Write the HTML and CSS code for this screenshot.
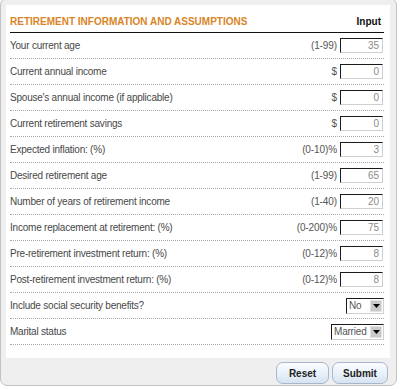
FILE: index.html
```html
<!DOCTYPE html>
<html>
<head>
<meta charset="utf-8">
<link rel="stylesheet" href="styles.css">
</head>
<body>
<div class="frame">
  <div class="panel">
    <div class="head">
      <span class="title">RETIREMENT INFORMATION AND ASSUMPTIONS</span>
      <span class="col">Input</span>
    </div>
    <div class="row"><span class="label">Your current age</span><span class="ctl"><span class="hint">(1-99)</span><span class="field">35</span></span></div>
    <div class="row"><span class="label">Current annual income</span><span class="ctl"><span class="hint">$</span><span class="field">0</span></span></div>
    <div class="row"><span class="label">Spouse's annual income (if applicable)</span><span class="ctl"><span class="hint">$</span><span class="field">0</span></span></div>
    <div class="row"><span class="label">Current retirement savings</span><span class="ctl"><span class="hint">$</span><span class="field">0</span></span></div>
    <div class="row"><span class="label">Expected inflation: (%)</span><span class="ctl"><span class="hint">(0-10)%</span><span class="field">3</span></span></div>
    <div class="row"><span class="label">Desired retirement age</span><span class="ctl"><span class="hint">(1-99)</span><span class="field">65</span></span></div>
    <div class="row"><span class="label">Number of years of retirement income</span><span class="ctl"><span class="hint">(1-40)</span><span class="field">20</span></span></div>
    <div class="row"><span class="label">Income replacement at retirement: (%)</span><span class="ctl"><span class="hint">(0-200)%</span><span class="field">75</span></span></div>
    <div class="row"><span class="label">Pre-retirement investment return: (%)</span><span class="ctl"><span class="hint">(0-12)%</span><span class="field">8</span></span></div>
    <div class="row"><span class="label">Post-retirement investment return: (%)</span><span class="ctl"><span class="hint">(0-12)%</span><span class="field">8</span></span></div>
    <div class="row"><span class="label">Include social security benefits?</span><span class="ctl"><span class="select sel-no"><span class="opt">No</span><span class="arrow"><svg width="7" height="4" viewBox="0 0 7 4"><path d="M0 0H7L3.5 4Z" fill="#000"/></svg></span></span></span></div>
    <div class="row"><span class="label">Marital status</span><span class="ctl"><span class="select sel-mar"><span class="opt">Married</span><span class="arrow"><svg width="7" height="4" viewBox="0 0 7 4"><path d="M0 0H7L3.5 4Z" fill="#000"/></svg></span></span></span></div>
  </div>
  <div class="actions">
    <button class="btn btn-reset">Reset</button>
    <button class="btn btn-submit">Submit</button>
  </div>
</div>
</body>
</html>
```
FILE: styles.css
```css
html, body {
  margin: 0;
  padding: 0;
  background: #ffffff;
  overflow: hidden;
}
body {
  font-family: "Liberation Sans", Arial, sans-serif;
  font-size: 10px;
}
.frame {
  box-sizing: border-box;
  width: 397px;
  height: 388px;
  margin-top: -2px;
  border: 1px solid #c2c2c2;
  border-radius: 7px;
  background: #efefef;
  padding: 6px 0 0 5px;
}
.panel {
  box-sizing: border-box;
  width: 384px;
  height: 353px;
  background: #ffffff;
  padding: 0 6px 0 4px;
}
.head {
  display: flex;
  justify-content: space-between;
  align-items: flex-end;
  height: 27px;
  padding: 0 3px 0 0;
  border-bottom: 1px solid #111;
  box-sizing: content-box;
}
.title {
  color: #d98526;
  font-weight: bold;
  font-size: 10px;
  line-height: 12px;
  padding-bottom: 4px;
}
.col {
  color: #111;
  font-weight: bold;
  font-size: 10px;
  line-height: 12px;
  padding-bottom: 4px;
}
.row {
  display: flex;
  justify-content: space-between;
  align-items: center;
  height: 25px;
  border-bottom: 1px dotted #a8a8a8;
}
.label {
  color: #484848;
  letter-spacing: -0.22px;
  line-height: 12px;
  padding-top: 1px;
}
.ctl {
  display: flex;
  align-items: center;
  gap: 3px;
  padding-right: 1px;
}
.hint {
  color: #555;
  letter-spacing: -0.1px;
}
.field {
  display: block;
  box-sizing: border-box;
  width: 43px;
  height: 15px;
  border-top: 1px solid #1a1a1a;
  border-left: 1px solid #1a1a1a;
  border-right: 1px solid #cfcfcf;
  border-bottom: 1px solid #cfcfcf;
  background: #fff;
  color: #8a8a8a;
  text-align: right;
  padding-right: 3px;
  line-height: 13px;
}
.select {
  box-sizing: border-box;
  display: flex;
  align-items: center;
  justify-content: space-between;
  height: 16px;
  border-top: 1px solid #1a1a1a;
  border-left: 1px solid #1a1a1a;
  border-right: 1px solid #cfcfcf;
  border-bottom: 1px solid #cfcfcf;
  background: #fff;
  padding: 1px;
  margin-right: -1px;
}
.sel-no { width: 38px; }
.sel-mar { width: 53px; }
.opt {
  color: #555;
  padding-left: 1px;
  line-height: 12px;
  letter-spacing: -0.2px;
}
.arrow {
  display: flex;
  align-items: center;
  justify-content: center;
  width: 12px;
  height: 12px;
  flex: none;
  background: #c9c9c9;
  border: 1px solid #e2e2e2;
  box-sizing: border-box;
}
.actions {
  display: flex;
  justify-content: flex-end;
  gap: 3px;
  width: 384px;
  padding-right: 2px;
  box-sizing: border-box;
  margin-top: 4px;
}
.btn {
  box-sizing: border-box;
  height: 22px;
  border: 1px solid #a7b6ca;
  border-radius: 7px;
  background: linear-gradient(#fbfdff, #e9f1fa 50%, #d6e3f1);
  font-family: "Liberation Sans", Arial, sans-serif;
  font-weight: bold;
  font-size: 10px;
  color: #222;
  padding: 0;
}
.btn-reset { width: 53px; }
.btn-submit { width: 56px; }
```
